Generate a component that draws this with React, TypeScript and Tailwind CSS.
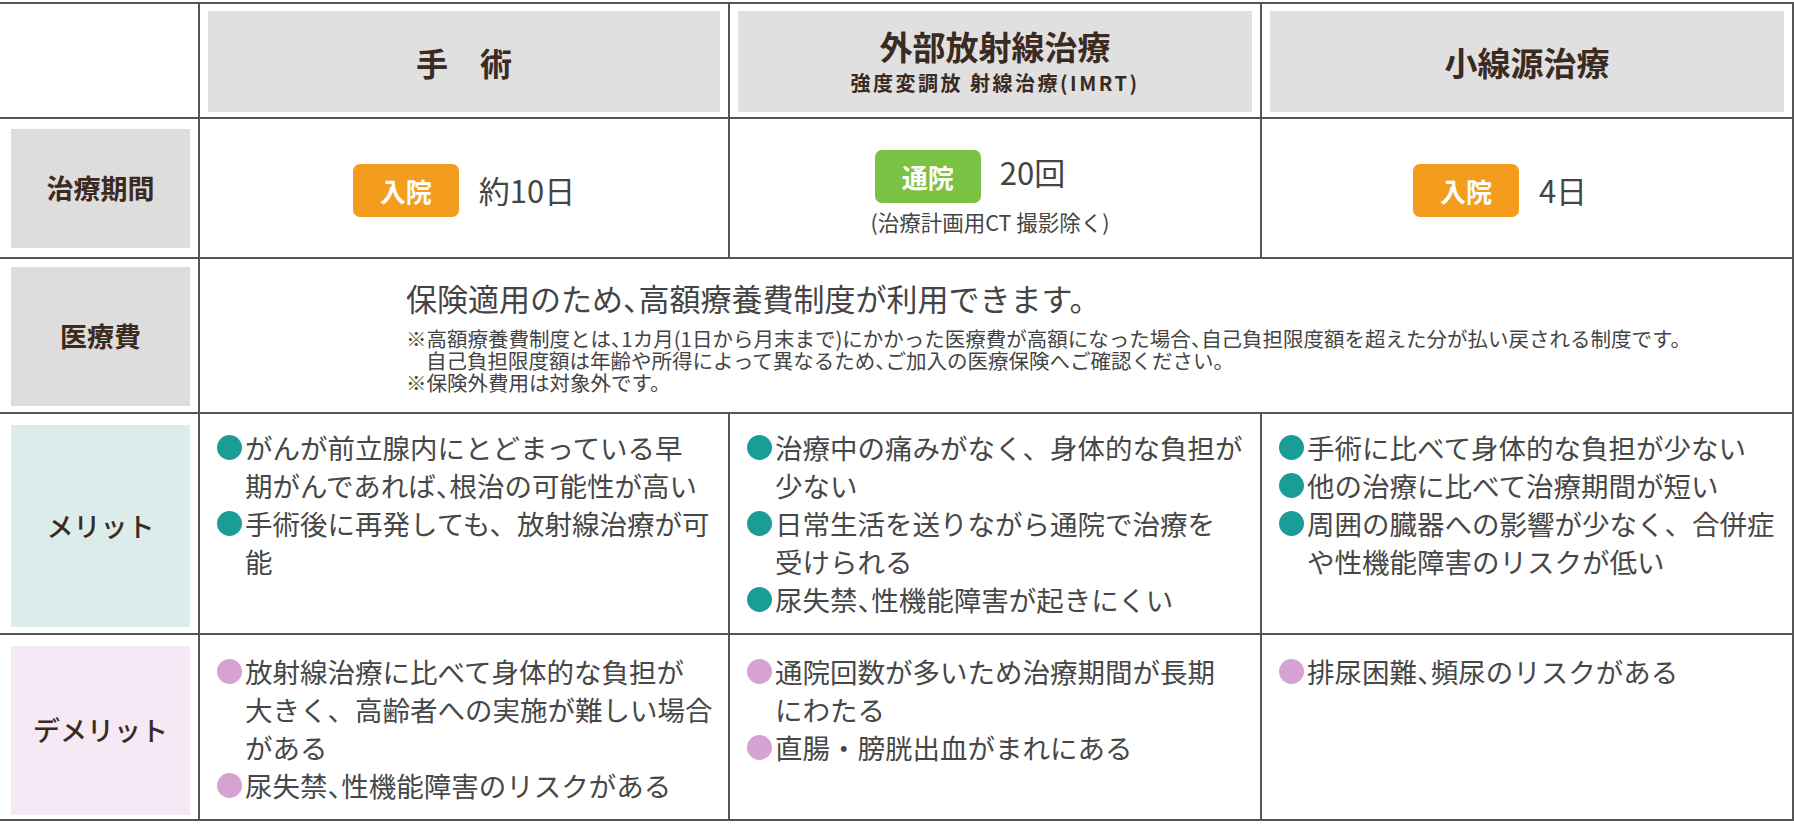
import React from 'react';

// 前立腺がん 治療法比較表

const LINE = 'border-[#555]';

const N = () => <span className="[font-feature-settings:'halt']">、</span>;

function Badge({ label, color }: { label: string; color: string }) {
  return (
    <span className={`inline-flex items-center justify-center w-[106px] h-[53px] rounded-[7px] text-white text-[26px] font-bold ${color}`}>
      {label}
    </span>
  );
}

function Label({ text, bg, weight = 'font-bold', pad = 'pt-[10px] pb-[9px]' }: {
  text: string; bg: string; weight?: string; pad?: string;
}) {
  return (
    <div className={`border-r-2 border-b-2 ${LINE} pl-[11px] pr-[8px] ${pad}`}>
      <div className={`h-full flex items-center justify-center ${bg} text-[27px] ${weight} text-[#3d2a1e]`}>{text}</div>
    </div>
  );
}

function Head({ children }: { children: React.ReactNode }) {
  return (
    <div className={`border-r-2 border-b-2 ${LINE} pt-[7px] pb-[5px] px-[8px]`}>
      <div className="h-full bg-[#dfe0df] flex flex-col items-center justify-center text-[#3b2a1f] font-bold">
        {children}
      </div>
    </div>
  );
}

function Bullets({ items, dot, pt }: { items: React.ReactNode[][]; dot: string; pt: string }) {
  return (
    <div className={`border-r-2 border-b-2 ${LINE} pl-[17px] ${pt} text-[27.5px] leading-[38px] text-[#474747]`}>
      {items.map((lines, i) => (
        <div key={i} className="flex">
          <span className={`w-[25px] h-[25px] rounded-full shrink-0 mt-[7px] ${dot}`} />
          <div className="ml-[3px]">
            {lines.map((l, j) => <div key={j} className="whitespace-nowrap">{l}</div>)}
          </div>
        </div>
      ))}
    </div>
  );
}

const merits: React.ReactNode[][][] = [
  [
    ['がんが前立腺内にとどまっている早', <>期がんであれば<N />根治の可能性が高い</>],
    ['手術後に再発しても、放射線治療が可', '能'],
  ],
  [
    ['治療中の痛みがなく、身体的な負担が', '少ない'],
    ['日常生活を送りながら通院で治療を', '受けられる'],
    [<>尿失禁<N />性機能障害が起きにくい</>],
  ],
  [
    ['手術に比べて身体的な負担が少ない'],
    ['他の治療に比べて治療期間が短い'],
    ['周囲の臓器への影響が少なく、合併症', 'や性機能障害のリスクが低い'],
  ],
];

const demerits: React.ReactNode[][][] = [
  [
    ['放射線治療に比べて身体的な負担が', '大きく、高齢者への実施が難しい場合', 'がある'],
    [<>尿失禁<N />性機能障害のリスクがある</>],
  ],
  [
    ['通院回数が多いため治療期間が長期', 'にわたる'],
    ['直腸・膀胱出血がまれにある'],
  ],
  [
    [<>排尿困難<N />頻尿のリスクがある</>],
  ],
];

export default function App() {
  return (
    <div className="w-[1794px] h-[824px] bg-white pt-[2px] font-['Noto_Sans_CJK_JP',sans-serif]">
      <div className={`grid grid-cols-[200px_530px_532px_532px] grid-rows-[115px_140px_155px_221px_186px] border-t-2 ${LINE}`}>
        {/* header */}
        <div className={`border-r-2 border-b-2 ${LINE}`} />
        <Head><span className="text-[32px] leading-[40px]">手　術</span></Head>
        <Head>
          <span className="text-[33px] leading-[36px]">外部放射線治療</span>
          <span className="text-[20px] leading-[24px] mt-[7px] tracking-[2.5px]">強度変調放 射線治療(IMRT)</span>
        </Head>
        <Head><span className="text-[33px] leading-[40px]">小線源治療</span></Head>

        {/* 治療期間 */}
        <Label text="治療期間" bg="bg-[#dcdddc]" />
        <div className={`border-r-2 border-b-2 ${LINE} flex items-center justify-center gap-[20px] pt-[4px]`}>
          <Badge label="入院" color="bg-[#f39c1e]" />
          <span className="text-[31px] text-[#444]">約10日</span>
        </div>
        <div className={`border-r-2 border-b-2 ${LINE} flex flex-col items-center justify-center pt-[8px]`}>
          <div className="flex items-center gap-[19px] pr-[50px]">
            <Badge label="通院" color="bg-[#7bc143]" />
            <span className="text-[31px] text-[#444] -mt-[8px]">20回</span>
          </div>
          <span className="text-[21.5px] leading-[26px] mt-[6px] pr-[10px] text-[#444]">(治療計画用CT 撮影除く)</span>
        </div>
        <div className={`border-r-2 border-b-2 ${LINE} flex items-center justify-center gap-[20px] pr-[54px] pt-[4px]`}>
          <Badge label="入院" color="bg-[#f39c1e]" />
          <span className="text-[31px] text-[#444]">4日</span>
        </div>

        {/* 医療費 */}
        <Label text="医療費" bg="bg-[#dcdddc]" pad="pt-[8px] pb-[6px]" />
        <div className={`col-span-3 border-r-2 border-b-2 ${LINE} pl-[206px] pt-[21px] text-[#444]`}>
          <p className="text-[31px] leading-[36px]">保険適用のため<N />高額療養費制度が利用できます。</p>
          <div className="mt-[11px] text-[20.5px] leading-[22px]">
            <p>※高額療養費制度とは<N />1カ月(1日から月末まで)にかかった医療費が高額になった場合<N />自己負担限度額を超えた分が払い戻される制度です。</p>
            <p className="pl-[20px]">自己負担限度額は年齢や所得によって異なるため<N />ご加入の医療保険へご確認ください。</p>
            <p>※保険外費用は対象外です。</p>
          </div>
        </div>

        {/* メリット */}
        <Label text="メリット" bg="bg-[#dcecea]" weight="font-medium" pad="pt-[11px] pb-[6px]" />
        {merits.map((items, i) => (
          <Bullets key={i} items={items} dot="bg-[#1a9d97]" pt="pt-[14px]" />
        ))}

        {/* デメリット */}
        <Label text="デメリット" bg="bg-[#f4e9f4]" weight="font-medium" pad="pt-[11px] pb-[4px]" />
        {demerits.map((items, i) => (
          <Bullets key={i} items={items} dot="bg-[#d5a2d2]" pt="pt-[17px]" />
        ))}
      </div>
    </div>
  );
}
